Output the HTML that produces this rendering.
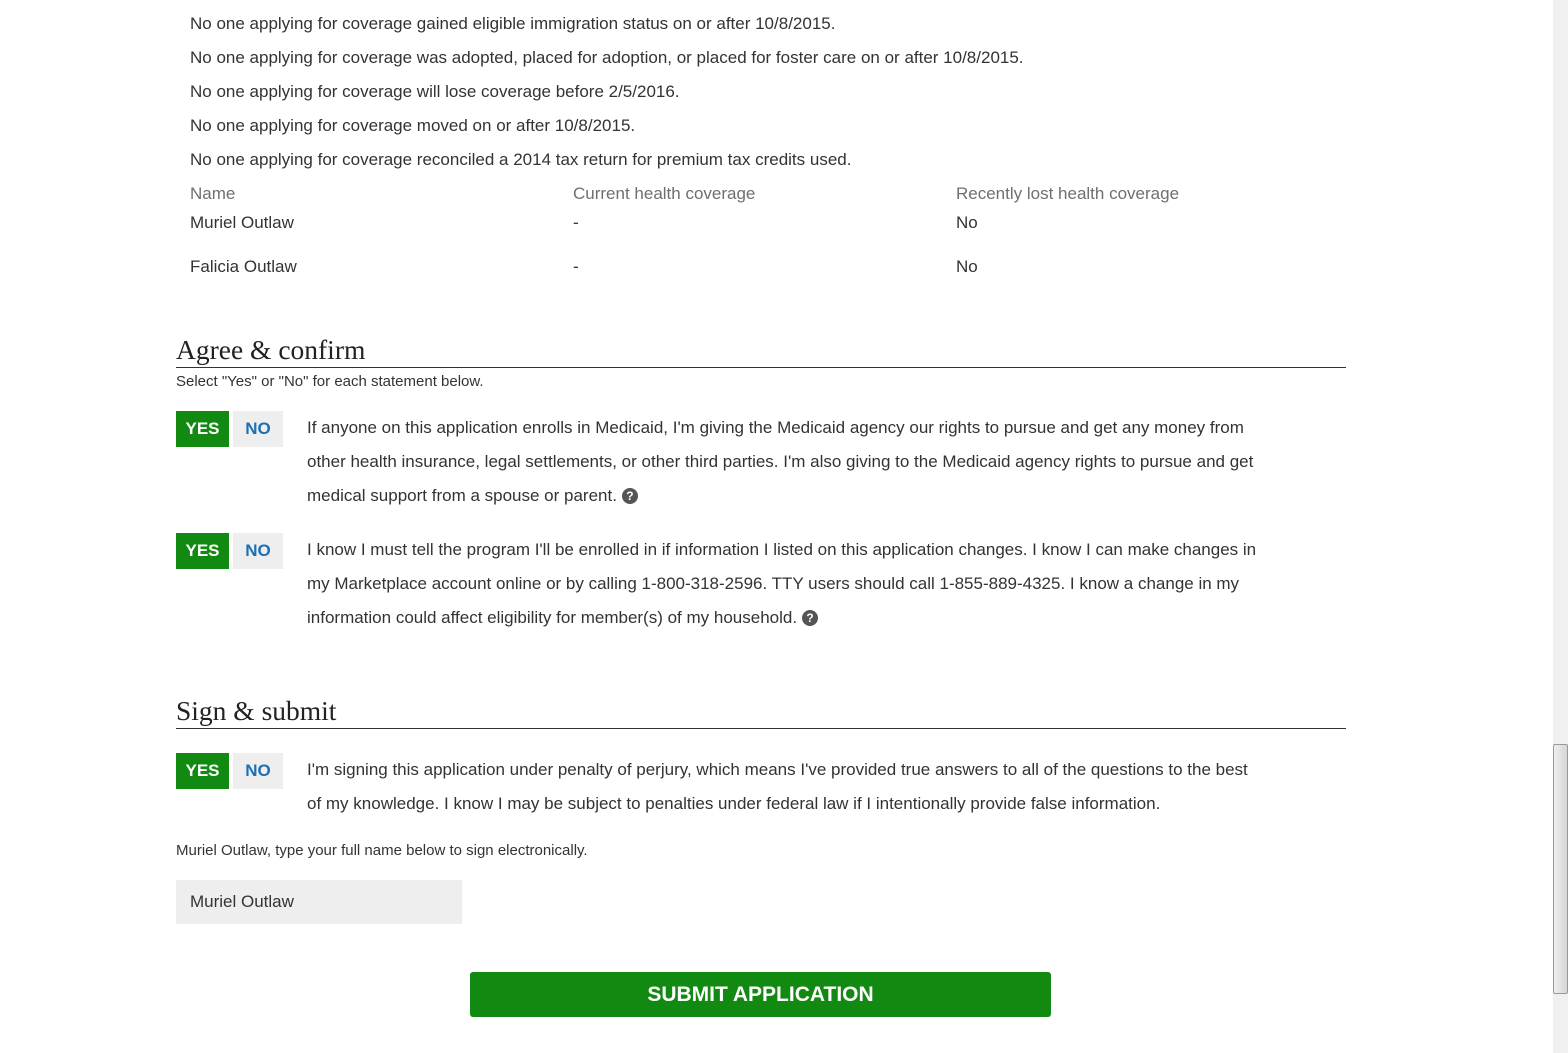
<!DOCTYPE html>
<html><head><meta charset="utf-8"><style>
body{margin:0;width:1568px;height:1053px;background:#fff;font-family:"Liberation Sans",sans-serif;color:#333;position:relative;overflow:hidden}
.a{position:absolute;white-space:nowrap;font-size:17px}
.g{color:#6f6f6f}
h2{position:absolute;margin:0;font-family:"Liberation Serif",serif;font-weight:normal;font-size:27.5px;color:#222;left:176px}
.hr{position:absolute;left:176px;width:1170px;height:1px;background:#333}
.yes,.no{position:absolute;width:53px;height:36px;line-height:36px;text-align:center;font-weight:bold;font-size:17px}
.yes{background:#128a12;color:#fff;left:176px}
.no{background:#eee;color:#1a6fb5;left:233px;width:50px}
.q{display:inline-block;width:16px;height:16px;border-radius:50%;background:#555;color:#fff;font-size:12px;font-weight:bold;text-align:center;line-height:16px;vertical-align:1px;margin-left:5px}
.s{font-size:15px}
</style></head><body>
<div class="a" style="left:190px;top:14px">No one applying for coverage gained eligible immigration status on or after 10/8/2015.</div>
<div class="a" style="left:190px;top:48px">No one applying for coverage was adopted, placed for adoption, or placed for foster care on or after 10/8/2015.</div>
<div class="a" style="left:190px;top:82px">No one applying for coverage will lose coverage before 2/5/2016.</div>
<div class="a" style="left:190px;top:116px">No one applying for coverage moved on or after 10/8/2015.</div>
<div class="a" style="left:190px;top:150px">No one applying for coverage reconciled a 2014 tax return for premium tax credits used.</div>
<div class="a g" style="left:190px;top:184px">Name</div>
<div class="a g" style="left:573px;top:184px">Current health coverage</div>
<div class="a g" style="left:956px;top:184px">Recently lost health coverage</div>
<div class="a" style="left:190px;top:213px">Muriel Outlaw</div>
<div class="a" style="left:573px;top:213px">-</div>
<div class="a" style="left:956px;top:213px">No</div>
<div class="a" style="left:190px;top:257px">Falicia Outlaw</div>
<div class="a" style="left:573px;top:257px">-</div>
<div class="a" style="left:956px;top:257px">No</div>

<h2 style="top:334px">Agree &amp; confirm</h2>
<div class="hr" style="top:367px"></div>
<div class="a s" style="left:176px;top:373px">Select "Yes" or "No" for each statement below.</div>

<div class="yes" style="top:411px">YES</div><div class="no" style="top:411px">NO</div>
<div class="a" style="left:307px;top:418px">If anyone on this application enrolls in Medicaid, I'm giving the Medicaid agency our rights to pursue and get any money from</div>
<div class="a" style="left:307px;top:452px">other health insurance, legal settlements, or other third parties. I'm also giving to the Medicaid agency rights to pursue and get</div>
<div class="a" style="left:307px;top:486px">medical support from a spouse or parent.<span class="q">?</span></div>

<div class="yes" style="top:533px">YES</div><div class="no" style="top:533px">NO</div>
<div class="a" style="left:307px;top:540px">I know I must tell the program I'll be enrolled in if information I listed on this application changes. I know I can make changes in</div>
<div class="a" style="left:307px;top:574px">my Marketplace account online or by calling 1-800-318-2596. TTY users should call 1-855-889-4325. I know a change in my</div>
<div class="a" style="left:307px;top:608px">information could affect eligibility for member(s) of my household.<span class="q">?</span></div>

<h2 style="top:695px">Sign &amp; submit</h2>
<div class="hr" style="top:728px"></div>
<div class="yes" style="top:753px">YES</div><div class="no" style="top:753px">NO</div>
<div class="a" style="left:307px;top:760px">I'm signing this application under penalty of perjury, which means I've provided true answers to all of the questions to the best</div>
<div class="a" style="left:307px;top:794px">of my knowledge. I know I may be subject to penalties under federal law if I intentionally provide false information.</div>
<div class="a s" style="left:176px;top:842px">Muriel Outlaw, type your full name below to sign electronically.</div>
<div style="position:absolute;left:176px;top:880px;width:286px;height:44px;background:#eee"></div>
<div class="a" style="left:190px;top:892px">Muriel Outlaw</div>
<div style="position:absolute;left:470px;top:972px;width:581px;height:45px;background:#128a12;border-radius:3px;color:#fff;font-weight:bold;font-size:21px;text-align:center;line-height:46px">SUBMIT APPLICATION</div>

<div style="position:absolute;left:1553px;top:0;width:15px;height:1053px;background:#f0f0f0"></div>
<div style="position:absolute;left:1553px;top:744px;width:13px;height:248px;background:linear-gradient(90deg,#eee,#d6d6d6);border:1px solid #999;border-radius:2px"></div>
</body></html>
